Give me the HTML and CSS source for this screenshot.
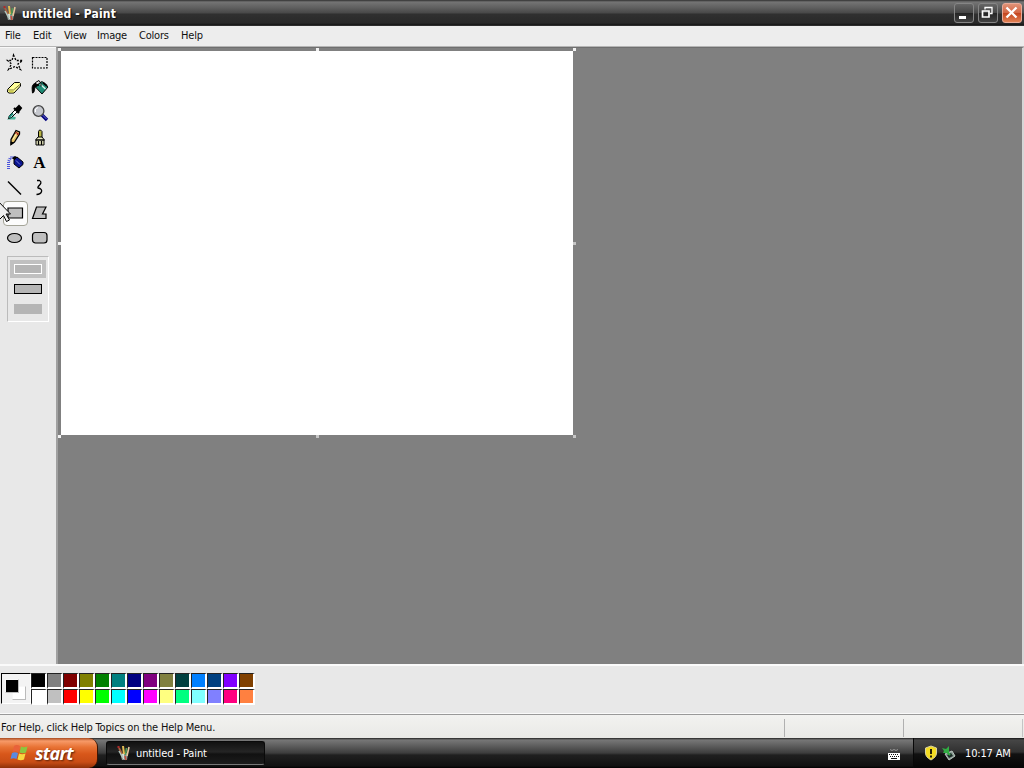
FILE: index.html
```html
<!DOCTYPE html>
<html lang="en">
<head>
    <meta charset="utf-8">
    <title>untitled - Paint</title>
    <link rel="stylesheet" href="styles.css">
</head>
<body>

<!-- paint logo, used in the title bar and the taskbar -->
<svg class="defs" width="0" height="0">
    <symbol id="paint-logo" viewBox="0 0 16 16">
        <path d="M4 8h8l-1 7H6z" fill="#8c9692"/>
        <path d="M6 9h2v5H7z" fill="#d8dfd5"/>
        <path d="M3 3l3 6" stroke="#a8603f" stroke-width="1.800"/>
        <path d="M1.500 1h2v2h-2z" fill="#b02a2a"/>
        <path d="M7 1l1 8" stroke="#e3bd52" stroke-width="2"/>
        <path d="M10.500 3l-1 7" stroke="#4f9b57" stroke-width="1.600"/>
        <path d="M13 2l-2 9" stroke="#e9c89d" stroke-width="1.600"/>
        <path d="M3 6l4 7" stroke="#b2c7bd" stroke-width="1.500"/>
        <path d="M9 11l1 4" stroke="#c64a38" stroke-width="1.400"/>
    </symbol>
</svg>

<div class="window">
    <div class="titlebar">
        <svg class="logo" width="16" height="16"><use href="#paint-logo"/></svg>
        <span class="title">untitled - Paint</span>
        <div class="controls">
            <div class="control">
                <svg width="19" height="19"><path d="M5 13h7v3H5z" fill="#fff"/></svg>
            </div>
            <div class="control">
                <svg width="19" height="19" fill="none" stroke="#fff"><path d="M7 6.500v-2h7v6h-2" stroke-width="1.300"/><path d="M4.500 8h6.500v6H4.500z" stroke-width="1.700"/></svg>
            </div>
            <div class="control close">
                <svg width="19" height="19"><path d="M4.500 4.500l10 10M14.500 4.500l-10 10" stroke="#fff" stroke-width="2.300"/></svg>
            </div>
        </div>
    </div>

    <div class="menubar">
        <span class="m-file">File</span>
        <span class="m-edit">Edit</span>
        <span class="m-view">View</span>
        <span class="m-image">Image</span>
        <span class="m-colors">Colors</span>
        <span class="m-help">Help</span>
    </div>

    <div class="main">
        <div class="sidebar">
            <div class="tools">
                <div class="tool">
                    <svg width="19" height="19" fill="none" stroke="#000"><path d="M8.500 2l2.500 5.500h6.500L13 11l2.500 5.500-5.500-3-6.500 3 3-5.500-4-3.500H7z" stroke-width="1.300" stroke-dasharray="2 1.400"/></svg>
                </div>
                <div class="tool">
                    <svg width="19" height="19" fill="none" stroke="#000"><path d="M2.500 4.500h14.500v10.500H2.500z" stroke-width="1.200" stroke-dasharray="2 1"/></svg>
                </div>
                <div class="tool">
                    <svg width="19" height="19" stroke="#000"><path d="M2.500 11.500l7-7h5l1 1v2.500l-6.500 7H4l-1.500-1z" fill="#ffff9a"/><path d="M2.500 12h6l7-6" fill="none" stroke="#77753a"/><path d="M3.500 12.500h5v2h-4z" fill="#d2cf54" stroke="none"/></svg>
                </div>
                <div class="tool">
                    <svg width="19" height="19" stroke="#000"><path d="M5 8.500l7-5 6 5.500-6 7z" fill="#1f8c76"/><path d="M10 6l5.500 5" stroke="#d7f3ea" stroke-width="1.500"/><path d="M5.500 8V4.500L9 2.500l2 3v3" fill="none"/><path d="M5 5.500C1.500 6.500 2 10 2.500 15c2 0 2-4 2.500-6l4-2z"/><path d="M13 4.500l4 3.500" stroke-width="2"/></svg>
                </div>
                <div class="tool">
                    <svg width="19" height="19"><path d="M2 16.500h8l1-2-5-2z" fill="#48b09a"/><path d="M3.500 15.500l1-3 6-6 2 2-6 6z" fill="#fff" stroke="#000"/><path d="M9 5l5 5M11 6l3-3 2 2-3 4z" stroke="#000" stroke-width="2"/><path d="M4 14.500l4-4" stroke="#1c8c7b" stroke-width="1.800"/></svg>
                </div>
                <div class="tool">
                    <svg width="19" height="19"><path d="M12 12l5 5" stroke="#000080" stroke-width="3.300"/><path d="M12.500 12l4 4" stroke="#7776c9"/><circle cx="8.500" cy="8" r="5.400" fill="#c5c7cd" stroke="#444" stroke-width="1.300"/><path d="M5.500 9V6L8 4.500" fill="none" stroke="#fff"/></svg>
                </div>
                <div class="tool">
                    <svg width="19" height="19"><path d="M6 16.500v-5l5-9 3.500 1.500v2l-5 8z" fill="#e6c268" stroke="#000" stroke-width="1.300"/><path d="M10.500 4.500l3 2" stroke="#a3231a" stroke-width="2"/><path d="M5.500 17.500v-4l4 1z"/><path d="M8 11.500l3.500-6" stroke="#fff8b5"/></svg>
                </div>
                <div class="tool">
                    <svg width="19" height="19" stroke="#000"><path d="M8.500 10V3.500l1-1.500h1l1.500 1.500V10" fill="#b6b344"/><path d="M6 11.500L8 9h4l2 2.500v5.500H6z" fill="#eeeec4"/><path d="M5.500 12h9M8.500 13v4M11.500 13v4" fill="none" stroke-width="1.300"/></svg>
                </div>
                <div class="tool">
                    <svg width="19" height="19"><path d="M3.500 16V8.500l2-4H10" fill="none" stroke="#4a53dc" stroke-width="3" stroke-dasharray="1 1"/><path d="M9 7l3-3 6 5v2.500L14 15l-5-4z" fill="#0b1590" stroke="#000"/><path d="M11 7.500l4 4" stroke="#777fe1"/><path d="M7 5l3-2 2 1-3 3z"/></svg>
                </div>
                <div class="tool letter">A</div>
                <div class="tool">
                    <svg width="19" height="19"><path d="M3 3.500l13 13" stroke="#000" stroke-width="1.400"/></svg>
                </div>
                <div class="tool">
                    <svg width="19" height="19"><path d="M7 2.500h2.500C14 5 6.500 8.500 8 10c6 1 4 6-1.500 6.500" fill="none" stroke="#000" stroke-width="1.300"/></svg>
                </div>
                <div class="tool selected">
                    <svg width="19" height="19"><path d="M3 5h14.500v10H3z" fill="#bfbfbf" stroke="#000" stroke-width="1.200"/></svg>
                </div>
                <div class="tool">
                    <svg width="19" height="19"><path d="M6.500 4h9.500l-3.500 7H16v4.500H2.500z" fill="#bfbfbf" stroke="#000" stroke-width="1.200"/></svg>
                </div>
                <div class="tool">
                    <svg width="19" height="19"><ellipse cx="9.500" cy="10" rx="7" ry="4.500" fill="#bfbfbf" stroke="#000" stroke-width="1.200"/></svg>
                </div>
                <div class="tool">
                    <svg width="19" height="19"><rect x="2.500" y="4.500" width="14.500" height="10.500" rx="3" fill="#bfbfbf" stroke="#000" stroke-width="1.200"/></svg>
                </div>
            </div>
            <div class="options">
                <div class="option active"><div class="fill outline-white"></div></div>
                <div class="option"><div class="fill outline-black"></div></div>
                <div class="option"><div class="fill"></div></div>
            </div>
            <svg class="cursor" width="12" height="20" viewBox="0 0 12 20"><path d="M-4.500 .500v-4L10.500 12H6l3.500 6-3 1.500-3-6-4 4z" fill="#eee" stroke="#000"/></svg>
        </div>

        <div class="workspace">
            <div class="canvas">
                <i class="handle nw"></i>
                <i class="handle n"></i>
                <i class="handle ne"></i>
                <i class="handle w"></i>
                <i class="handle e"></i>
                <i class="handle sw"></i>
                <i class="handle s"></i>
                <i class="handle se"></i>
            </div>
        </div>
    </div>

    <div class="colorbox">
        <div class="current">
            <div class="background"></div>
            <div class="foreground"></div>
        </div>
        <div class="palette">
            <i class="black"></i><i class="gray"></i><i class="maroon"></i><i class="olive"></i><i class="green"></i><i class="teal"></i><i class="navy"></i><i class="purple"></i><i class="moss"></i><i class="pine"></i><i class="azure"></i><i class="steel"></i><i class="violet"></i><i class="brown"></i>
            <i class="white"></i><i class="silver"></i><i class="red"></i><i class="yellow"></i><i class="lime"></i><i class="cyan"></i><i class="blue"></i><i class="magenta"></i><i class="cream"></i><i class="mint"></i><i class="sky"></i><i class="lilac"></i><i class="pink"></i><i class="orange"></i>
        </div>
    </div>

    <div class="statusbar">
        <div class="help-text">For Help, click Help Topics on the Help Menu.</div>
        <div class="position"></div>
        <div class="size"></div>
    </div>
</div>

<div class="taskbar">
    <div class="start">
        <svg width="20" height="20" viewBox="0 0 20 20">
            <path d="M4 3c2-1.500 4-1 6 0L8.500 9C6.500 8 4.500 8 2.500 9z" fill="#e8623a"/>
            <path d="M11 3.500c2 1 4 1 6.500 0L16 9.500c-2 1-4.500 1-6.500 0z" fill="#8bc63f"/>
            <path d="M2 10c2-1 4-1 6 0l-1.500 6c-2-1-4-1-6 0z" fill="#5b8ae0"/>
            <path d="M9 10.500c2 1 4.500 1 6.500 0L14 16.500c-2 1-4.500 1-6.500 0z" fill="#f8d640"/>
        </svg>
        <span>start</span>
    </div>
    <div class="task">
        <svg width="16" height="16"><use href="#paint-logo"/></svg>
        <span>untitled - Paint</span>
    </div>
    <svg class="keyboard" width="14" height="13"><path d="M3 1.500l2 1 2-1 2 1 2-1" stroke="#999" fill="none"/><path d="M1 5h12v7H1z" fill="#fff"/><path d="M2 6.500h10M3 8.500h9" stroke="#111" stroke-dasharray="1 1"/><path d="M4 10.500h6" stroke="#111"/></svg>
    <div class="tray">
        <svg width="14" height="16"><path d="M7 1l5.500 2v5c0 3-2 5-5.500 7-3.500-2-5.500-4-5.500-7V3z" fill="#f4dc22" stroke="#d8d3a0"/><path d="M7 4v5M7 10.500v2" stroke="#231e08" stroke-width="2"/></svg>
        <svg width="16" height="16"><path d="M4 9l7-3 3 5-6 4z" fill="#8a9c94" stroke="#b9c6bf"/><path d="M6 10l4-2 2 3-4 2z" fill="#1c2b27"/><path d="M1 3l4 1 3-3v7H2l1-2z" fill="#31ad43"/><path d="M5 6l4 4" stroke="#31ad43" stroke-width="2"/></svg>
        <span class="clock">10:17 AM</span>
    </div>
</div>

</body>
</html>
```
FILE: styles.css
```css
* {
    box-sizing: border-box;
}
body {
    margin: 0;
    width: 1024px;
    height: 768px;
    overflow: hidden;
    font-family: "DejaVu Sans Condensed", "DejaVu Sans", sans-serif;
    font-size: 11px;
    color: #111;
    background-color: #e8e8e8;
}
svg {
    display: block;
    flex: none;
}
.defs {
    position: absolute;
}
.window {
    height: 738px;
    display: flex;
    flex-direction: column;
}

/* title bar */
.titlebar {
    height: 26px;
    flex: none;
    display: flex;
    align-items: center;
    padding: 0 2px;
    background: linear-gradient(#303030 0, #747474 2px, #626262 7px, #484848 13px, #303030 14px, #292929 23px, #151515 25px, #444 26px);
    color: #fff;
}
.title {
    font-weight: bold;
    font-size: 12px;
    letter-spacing: 0.15px;
    margin: 1px 0 0 4px;
    text-shadow: 1px 1px 1px #111;
}
.controls {
    margin-left: auto;
    display: flex;
    gap: 4px;
}
.control {
    width: 20px;
    height: 20px;
    border: 1px solid #858585;
    border-radius: 3px;
    background: linear-gradient(#666, #464646 48%, #252525 52%, #414141);
}
.control svg {
    margin: -1px;
}
.close {
    border-color: #e8aa98;
    background: linear-gradient(#df9277, #d46745 48%, #c44620 52%, #e28153);
}

/* menu */
.menubar {
    height: 20px;
    flex: none;
    display: flex;
    align-items: center;
    padding: 0 0 1px 5px;
    background-color: #ededed;
    letter-spacing: -0.2px;
}
.m-file {
    width: 28px;
}
.m-edit {
    width: 31px;
}
.m-view {
    width: 33px;
}
.m-image {
    width: 42px;
}
.m-colors {
    width: 42px;
}

/* tool box */
.main {
    height: 618px;
    flex: none;
    display: flex;
    border-top: 1px solid #b5b5b5;
}
.sidebar {
    position: relative;
    width: 56px;
    padding: 3px 3px 0;
    background-color: #e8e8e8;
    border-top: 1px solid #f8f8f8;
}
.tools {
    display: grid;
    grid-template-columns: 25px 25px;
    grid-auto-rows: 25px;
}
.tool {
    display: flex;
    align-items: center;
    justify-content: center;
}
.tool svg {
    margin: 0 2px 2px 0;
}
.letter {
    font-family: "Liberation Serif", serif;
    font-weight: bold;
    font-size: 17px;
    color: #000;
    padding: 0 2px 2px 0;
}
.selected {
    background-color: #fcfcfc;
    border: 1px solid #a4a498;
    border-radius: 4px;
}
.options {
    width: 42px;
    height: 66px;
    margin: 5px 0 0 4px;
    padding: 3px 2px;
    border: 1px solid #bbb;
    border-right-color: #fff;
    border-bottom-color: #fff;
}
.option {
    height: 18px;
    margin-bottom: 2px;
    width: 36px;
    padding: 4px;
}
.active {
    background-color: #c0c0c0;
}
.fill {
    height: 10px;
    background-color: #b5b5b5;
}
.outline-white {
    border: 1px solid #fff;
}
.outline-black {
    border: 1px solid #000;
}
.cursor {
    position: absolute;
    left: 0;
    top: 154px;
}

/* drawing area */
.workspace {
    flex: 1;
    background-color: #808080;
    border: 1px solid #6f6f6f;
    border-left: 2px solid #a0a0a0;
    border-right: 2px solid #d6d6d6;
    border-bottom: 0;
    padding: 3px;
}
.canvas {
    position: relative;
    width: 512px;
    height: 384px;
    background-color: #fff;
}
.handle {
    position: absolute;
    width: 3px;
    height: 3px;
    background-color: #c6c6c6;
}
.nw, .n, .ne {
    top: -3px;
    background-color: #f2f2f2;
}
.w, .e {
    top: 191px;
}
.sw, .s, .se {
    top: 384px;
}
.nw, .w, .sw {
    left: -3px;
    background-color: #f2f2f2;
}
.n, .s {
    left: 255px;
}
.ne, .e, .se {
    left: 512px;
}

/* colours */
.colorbox {
    height: 50px;
    flex: none;
    display: flex;
    padding: 7px 0 0 1px;
    background-color: #e8e8e8;
    border-top: 2px solid #fafafa;
    border-bottom: 1px solid #fafafa;
}
.current {
    position: relative;
    width: 30px;
    height: 31px;
    border: 1px solid #000;
    border-right-color: #fff;
    border-bottom-color: #fff;
    background-color: #f3f3f3;
}
.foreground, .background {
    position: absolute;
    border: 1px solid #f7f7f7;
    border-right-color: #bbb;
    border-bottom-color: #bbb;
}
.foreground {
    left: 3px;
    top: 5px;
    width: 14px;
    height: 14px;
    background-color: #000;
}
.background {
    left: 10px;
    top: 12px;
    width: 14px;
    height: 14px;
    background-color: #fff;
}
.palette {
    display: grid;
    grid-template-columns: repeat(14, 16px);
    grid-auto-rows: 16px;
}
.palette i {
    border: 1px solid #222;
    border-right: 2px solid #fff;
    border-bottom: 2px solid #fff;
}
.black { background-color: #000; }
.gray { background-color: #808080; }
.maroon { background-color: #800000; }
.olive { background-color: #808000; }
.green { background-color: #008000; }
.teal { background-color: #008080; }
.navy { background-color: #000080; }
.purple { background-color: #800080; }
.moss { background-color: #808040; }
.pine { background-color: #004040; }
.azure { background-color: #0080ff; }
.steel { background-color: #004080; }
.violet { background-color: #8000ff; }
.brown { background-color: #804000; }
.white { background-color: #fff; }
.silver { background-color: #c0c0c0; }
.red { background-color: #ff0000; }
.yellow { background-color: #ffff00; }
.lime { background-color: #00ff00; }
.cyan { background-color: #00ffff; }
.blue { background-color: #0000ff; }
.magenta { background-color: #ff00ff; }
.cream { background-color: #ffff80; }
.mint { background-color: #00ff80; }
.sky { background-color: #80ffff; }
.lilac { background-color: #8080ff; }
.pink { background-color: #ff0080; }
.orange { background-color: #ff8040; }

/* status bar */
.statusbar {
    flex: 1;
    display: flex;
    align-items: center;
    padding-top: 2px;
    border-top: 1px solid #999;
    background: linear-gradient(#f2f2f0, #e9e9e6);
    letter-spacing: -0.18px;
}
.help-text {
    width: 785px;
    height: 18px;
    line-height: 18px;
    padding-left: 1px;
    border-right: 1px solid #b0b0b0;
}
.position {
    width: 119px;
    height: 18px;
    border-right: 1px solid #b0b0b0;
}
.size {
    width: 119px;
    height: 18px;
    border-right: 1px solid #c4c4c4;
}

/* taskbar */
.taskbar {
    height: 30px;
    display: flex;
    align-items: center;
    color: #fff;
    background: linear-gradient(#222 0, #777 2px, #5d5d5d 8px, #3d3d3d 15px, #202020 17px, #111 28px, #000 30px);
}
.start {
    width: 98px;
    height: 30px;
    padding-left: 10px;
    display: flex;
    align-items: center;
    border-radius: 0 9px 9px 0;
    border-right: 1px solid #3a1605;
    background: linear-gradient(#a74b21 0, #f79a68 3px, #e87335 9px, #d8571a 16px, #c94d15 24px, #8d3008 30px);
}
.start span {
    font-family: "Open Sans", sans-serif;
    font-weight: bold;
    font-style: italic;
    font-size: 18px;
    letter-spacing: -0.7px;
    margin: -1px 0 0 5px;
    text-shadow: 1px 1px 2px #54200a;
}
.task {
    width: 159px;
    height: 24px;
    margin-left: 8px;
    padding-left: 9px;
    display: flex;
    align-items: center;
    border: 1px solid #090909;
    border-bottom-color: #777;
    border-radius: 3px;
    background: linear-gradient(#111, #252525 45%, #111 55%, #1c1c1c);
    letter-spacing: -0.1px;
}
.task span {
    margin: 1px 0 0 4px;
}
.keyboard {
    margin: 2px 0 0 622px;
}
.tray {
    width: 111px;
    height: 30px;
    margin-left: auto;
    padding-left: 10px;
    display: flex;
    align-items: center;
    border-left: 1px solid #080808;
    background: linear-gradient(#161616 0, #464646 2px, #303030 14px, #111 16px, #050505 30px);
}
.tray svg + svg {
    margin-left: 3px;
}
.clock {
    margin-left: 8px;
    letter-spacing: -0.15px;
}
```
